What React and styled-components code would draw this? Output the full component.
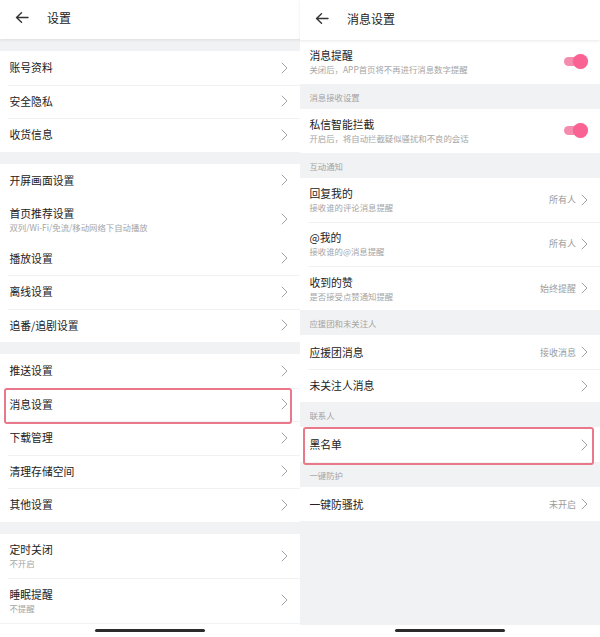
import React from 'react';
import styled, { createGlobalStyle } from 'styled-components';

const GlobalStyle = createGlobalStyle`
    html, body {
        margin: 0;
        padding: 0;
        background: #ffffff;
    }

    body {
        font-family: "Noto Sans CJK SC", "Noto Sans", "Liberation Sans", sans-serif;
        color: #212121;
    }
`

const Screen = styled.div`
    display: flex;
    width: 600px;
    height: 637px;
    overflow: hidden;
`

const Phone = styled.section`
    display: flex;
    flex-direction: column;
    width: 300px;
    height: 637px;
    background: #ffffff;
`

const Header = styled.header`
    position: relative;
    z-index: 2;
    display: flex;
    align-items: center;
    gap: 18px;
    height: ${p => p.$h}px;
    padding: 0 0 4px 15px;
    box-sizing: border-box;
    background: #ffffff;
    box-shadow: 0 1px 3px rgba(0, 0, 0, 0.09);
    flex-shrink: 0;
`

const Title = styled.h1`
    margin: 0;
    font-size: 12px;
    font-weight: 400;
    color: #222222;
`

const Body = styled.div`
    flex: 1;
    overflow: hidden;
    background: #f1f2f4;
`

const Gap = styled.div`
    height: ${p => p.$h}px;
`

const Group = styled.div`
    background: #ffffff;
`

const SectionLabel = styled.div`
    display: flex;
    align-items: center;
    height: 25px;
    padding: 1px 0 0 9.5px;
    box-sizing: border-box;
    font-size: 8.4px;
    color: #a3a3a3;
`

const Row = styled.div`
    position: relative;
    display: flex;
    align-items: center;
    justify-content: space-between;
    height: ${p => p.$h}px;
    padding: 0 ${p => p.$pr}px 0 9.5px;
    box-sizing: border-box;
    background: #ffffff;

    & + &::before {
        content: '';
        position: absolute;
        left: 8px;
        right: 0;
        top: 0;
        height: 1px;
        background: #f1f1f1;
    }
`

const Texts = styled.div`
    display: flex;
    flex-direction: column;
    gap: 2px;
`

const RowTitle = styled.span`
    font-size: 10.8px;
    line-height: 13px;
    color: #222222;
`

const RowSub = styled.span`
    font-size: 8.4px;
    line-height: 10px;
    color: #a5a5a5;
`

const Trail = styled.div`
    display: flex;
    align-items: center;
    gap: 5px;
`

const Value = styled.span`
    font-size: 9px;
    color: #9c9c9c;
`

const Highlight = styled.div`
    position: absolute;
    z-index: 1;
    left: ${p => p.$l}px;
    right: ${p => p.$r}px;
    top: 0;
    bottom: ${p => p.$b}px;
    border: 2px solid #e8788a;
    border-radius: 3px;
    pointer-events: none;
`

const Toggle = styled.div`
    position: relative;
    width: 24px;
    height: 15px;
    display: flex;
    align-items: center;

    &::before {
        content: '';
        width: 22px;
        height: 9px;
        border-radius: 5px;
        background: #f58cae;
    }

    &::after {
        content: '';
        position: absolute;
        right: 0;
        top: 0;
        width: 15px;
        height: 15px;
        border-radius: 50%;
        background: #fb6294;
        box-shadow: 0 0 1px rgba(200, 40, 90, 0.3);
    }
`

const HomeBar = styled.div`
    display: flex;
    justify-content: center;
    height: ${p => p.$h}px;
    padding-top: ${p => p.$t}px;
    box-sizing: border-box;
    background: #ffffff;
    flex-shrink: 0;
`

const Indicator = styled.div`
    width: 110px;
    height: 3px;
    border-radius: 2px;
    background: #2b2b2b;
`

function BackArrow() {
    return (
        <svg width="14" height="11" viewBox="0 0 14 11" fill="none">
            <path d="M13 5.5H1.5M6.5 0.8L1.5 5.5L6.5 10.2" stroke="#333" strokeWidth="1.4" strokeLinecap="round" strokeLinejoin="round" />
        </svg>
    )
}

function Chevron() {
    return (
        <svg width="7" height="12" viewBox="0 0 7 12" fill="none">
            <path d="M1 1L6 6L1 11" stroke="#a3a3a3" strokeWidth="1" strokeLinecap="round" strokeLinejoin="round" />
        </svg>
    )
}

function Item({ title, sub, value, toggle, highlight, h, pr }) {
    const height = h || (sub ? 44.5 : 33.5);
    return (
        <Row $h={height} $pr={pr}>
            <Texts>
                <RowTitle>{title}</RowTitle>
                {sub && <RowSub>{sub}</RowSub>}
            </Texts>
            {toggle ? <Toggle /> : (
                <Trail>
                    {value && <Value>{value}</Value>}
                    <Chevron />
                </Trail>
            )}
            {highlight && <Highlight {...highlight} />}
        </Row>
    )
}

const leftGroups = [
    [
        { title: '账号资料' },
        { title: '安全隐私' },
        { title: '收货信息' },
    ],
    [
        { title: '开屏画面设置' },
        { title: '首页推荐设置', sub: '双列/Wi-Fi/免流/移动网络下自动播放' },
        { title: '播放设置' },
        { title: '离线设置' },
        { title: '追番/追剧设置' },
    ],
    [
        { title: '推送设置' },
        { title: '消息设置', highlight: { $l: 3.5, $r: 8, $b: -3 } },
        { title: '下载管理' },
        { title: '清理存储空间' },
        { title: '其他设置' },
    ],
    [
        { title: '定时关闭', sub: '不开启' },
        { title: '睡眠提醒', sub: '不提醒' },
    ],
];

const rightSections = [
    {
        items: [
            { title: '消息提醒', sub: '关闭后，APP首页将不再进行消息数字提醒', toggle: true, h: 43.5 },
        ],
    },
    {
        label: '消息接收设置',
        items: [
            { title: '私信智能拦截', sub: '开启后，将自动拦截疑似骚扰和不良的会话', toggle: true, h: 44 },
        ],
    },
    {
        label: '互动通知',
        items: [
            { title: '回复我的', sub: '接收谁的评论消息提醒', value: '所有人', h: 44.3 },
            { title: '@我的', sub: '接收谁的@消息提醒', value: '所有人', h: 44.3 },
            { title: '收到的赞', sub: '是否接受点赞通知提醒', value: '始终提醒', h: 44.3 },
        ],
    },
    {
        label: '应援团和未关注人',
        items: [
            { title: '应援团消息', value: '接收消息' },
            { title: '未关注人消息' },
        ],
    },
    {
        label: '联系人',
        items: [
            { title: '黑名单', h: 35, highlight: { $l: 3, $r: 6, $b: -3 } },
        ],
    },
    {
        label: '一键防护',
        items: [
            { title: '一键防骚扰', value: '未开启' },
        ],
    },
];

export default function App() {
    return (
        <>
            <GlobalStyle />
            <Screen>
                <Phone>
                    <Header $h={39}>
                        <BackArrow />
                        <Title>设置</Title>
                    </Header>
                    <Body>
                        {leftGroups.map((group, i) => (
                            <React.Fragment key={i}>
                                <Gap $h={12} />
                                <Group>
                                    {group.map(item => (
                                        <Item key={item.title} pr={12.5} {...item} />
                                    ))}
                                </Group>
                            </React.Fragment>
                        ))}
                    </Body>
                    <HomeBar $h={13} $t={5}>
                        <Indicator />
                    </HomeBar>
                </Phone>

                <Phone>
                    <Header $h={40}>
                        <BackArrow />
                        <Title>消息设置</Title>
                    </Header>
                    <Body>
                        {rightSections.map((section, i) => (
                            <React.Fragment key={i}>
                                {section.label && <SectionLabel>{section.label}</SectionLabel>}
                                <Group>
                                    {section.items.map(item => (
                                        <Item key={item.title} pr={12} {...item} />
                                    ))}
                                </Group>
                            </React.Fragment>
                        ))}
                    </Body>
                    <HomeBar $h={12} $t={4}>
                        <Indicator />
                    </HomeBar>
                </Phone>
            </Screen>
        </>
    )
}
